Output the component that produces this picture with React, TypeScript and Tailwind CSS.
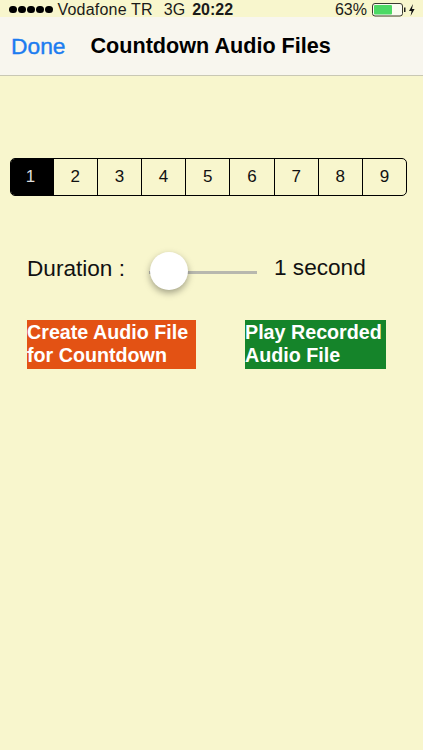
const SEGMENTS = ['1', '2', '3', '4', '5', '6', '7', '8', '9'];

function BatteryIcon() {
  return (
    <svg width="43" height="14" viewBox="0 0 43 14" className="block">
      <rect x="0.5" y="0.5" width="30" height="12.5" rx="2.5" fill="#fbfbf0" stroke="#3a3a30" />
      <rect x="2" y="2" width="18" height="9.5" rx="1" fill="#4cd964" />
      <rect x="32" y="4.5" width="1.5" height="4.5" fill="#222" />
      <path d="M41 1 L37 8 L39.6 8 L38.6 13 L42.6 6 L40 6 Z" fill="#111" />
    </svg>
  );
}

export default function App() {
  return (
    <div className="w-[423px] h-[750px] overflow-hidden bg-[#f8f6cd] text-black font-['Liberation_Sans',Arial,sans-serif]">
      {/* status bar */}
      <div className="h-[17px] pt-[2px] flex items-center pl-[9px] pr-[8px] text-[16px] text-[#1a1a1a] leading-none">
        <div className="flex gap-[1.5px]">
          <span className="w-[7.5px] h-[7.5px] rounded-full bg-black" />
          <span className="w-[7.5px] h-[7.5px] rounded-full bg-black" />
          <span className="w-[7.5px] h-[7.5px] rounded-full bg-black" />
          <span className="w-[7.5px] h-[7.5px] rounded-full bg-black" />
          <span className="w-[7.5px] h-[7.5px] rounded-full bg-black" />
        </div>
        <span className="ml-[5px] whitespace-nowrap tracking-[0.2px]">Vodafone TR</span>
        <span className="ml-[11px]">3G</span>
        <span className="ml-[7px] font-bold">20:22</span>
        <span className="ml-auto mr-[5px]">63%</span>
        <BatteryIcon />
      </div>

      {/* nav bar */}
      <div className="h-[59px] bg-[#f8f6ee] border-b border-[#c9c8b4] flex items-center pl-[11px]">
        <span className="text-[22.8px] font-normal text-[#1c7cf0] [-webkit-text-stroke:0.4px_#1c7cf0]">Done</span>
        <span className="ml-[25px] text-[21.6px] font-bold whitespace-nowrap">Countdown Audio Files</span>
      </div>

      {/* segmented control */}
      <div className="mt-[81.5px] ml-[9.5px] w-[397.5px] h-[38px] flex rounded-[5px] border border-black overflow-hidden">
        {SEGMENTS.map((n, i) => (
          <div
            key={n}
            className={`flex-1 flex items-center justify-center text-[17px] ${
              i === 0 ? 'bg-black text-[#dddddd]' : 'text-[#111]'
            } ${i > 0 && i < 8 ? 'border-r border-black' : ''}`}
          >
            <span className={i === 0 ? 'mr-[3px]' : ''}>{n}</span>
          </div>
        ))}
      </div>

      {/* duration slider */}
      <div className="mt-[55px] h-[44px] flex items-center pl-[27px]">
        <span className="text-[22.6px] w-[122px] text-[#111] pb-[7px] whitespace-nowrap">Duration :</span>
        <div className="relative w-[108px] h-[3px] bg-[#b8b8ae]">
          <span className="absolute left-[1px] top-[-19px] w-[38px] h-[38px] rounded-full bg-white shadow-[0_3px_7px_rgba(0,0,0,0.35)]" />
        </div>
        <span className="ml-[17px] text-[22.6px] text-[#111] pb-[9px] whitespace-nowrap">1 second</span>
      </div>

      {/* buttons */}
      <div className="mt-[25px] ml-[27px] flex gap-[49px]">
        <div className="w-[169px] h-[49px] bg-[#e35214] text-white font-bold text-[19.7px] leading-[23px] pt-[1px] whitespace-nowrap">
          Create Audio File
          <br />
          for Countdown
        </div>
        <div className="w-[141px] h-[49px] bg-[#15842a] text-white font-bold text-[19.7px] leading-[23px] pt-[1px] whitespace-nowrap">
          Play Recorded
          <br />
          Audio File
        </div>
      </div>
    </div>
  );
}
